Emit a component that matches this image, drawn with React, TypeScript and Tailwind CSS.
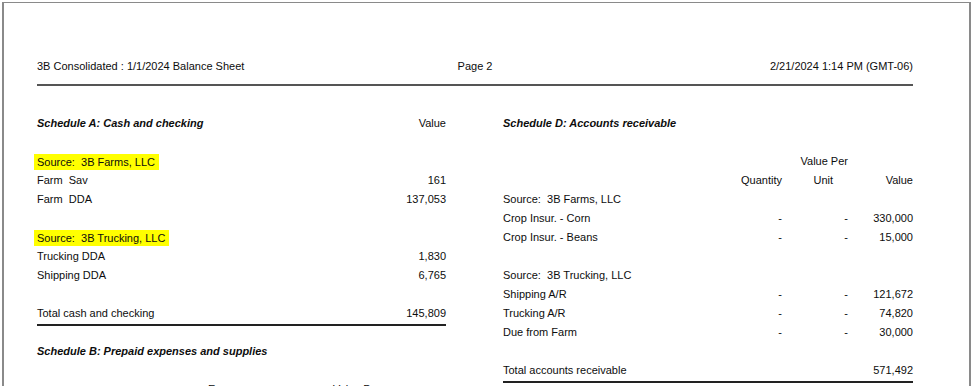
import React from "react";

type CashRow =
  | { kind: "source"; label: string }
  | { kind: "item"; label: string; value: string }
  | { kind: "blank" };

type ArRow =
  | { kind: "source"; label: string }
  | { kind: "item"; label: string; qty: string; unit: string; value: string }
  | { kind: "blank" };

const cashRows: CashRow[] = [
  { kind: "blank" },
  { kind: "source", label: "Source:  3B Farms, LLC" },
  { kind: "item", label: "Farm  Sav", value: "161" },
  { kind: "item", label: "Farm  DDA", value: "137,053" },
  { kind: "blank" },
  { kind: "source", label: "Source:  3B Trucking, LLC" },
  { kind: "item", label: "Trucking DDA", value: "1,830" },
  { kind: "item", label: "Shipping DDA", value: "6,765" },
  { kind: "blank" },
];

const arRows: ArRow[] = [
  { kind: "source", label: "Source:  3B Farms, LLC" },
  { kind: "item", label: "Crop Insur. - Corn", qty: "-", unit: "-", value: "330,000" },
  { kind: "item", label: "Crop Insur. - Beans", qty: "-", unit: "-", value: "15,000" },
  { kind: "blank" },
  { kind: "source", label: "Source:  3B Trucking, LLC" },
  { kind: "item", label: "Shipping A/R", qty: "-", unit: "-", value: "121,672" },
  { kind: "item", label: "Trucking A/R", qty: "-", unit: "-", value: "74,820" },
  { kind: "item", label: "Due from Farm", qty: "-", unit: "-", value: "30,000" },
  { kind: "blank" },
];

const row = "h-[19px] leading-[19px] whitespace-pre";
const title = "font-bold italic";

function ScheduleA() {
  return (
    <div className="w-[409px]">
      <div className={`${row} flex justify-between`}>
        <span className={title}>Schedule A: Cash and checking</span>
        <span>Value</span>
      </div>
      {cashRows.map((r, i) => {
        if (r.kind === "blank") return <div key={i} className={row} />;
        if (r.kind === "source")
          return (
            <div key={i} className={`${row} flex items-center`}>
              <span className="-ml-[3px] inline-block h-[16px] bg-[#ffff00] pl-[3px] pr-[4px] leading-[16px]">
                {r.label}
              </span>
            </div>
          );
        return (
          <div key={i} className={`${row} flex justify-between`}>
            <span>{r.label}</span>
            <span>{r.value}</span>
          </div>
        );
      })}
      <div className={`${row} flex justify-between`}>
        <span>Total cash and checking</span>
        <span>145,809</span>
      </div>
      <div className="mt-[1px] h-[2px] bg-[#222]" />
      <div className={`${row} mt-[16px]`}>
        <span className={title}>Schedule B: Prepaid expenses and supplies</span>
      </div>
      <div className={row} />
      {/* column heads of the next table, cut by the page edge */}
      <div className={`${row} relative`}>
        <span className="absolute left-[171px]">Expense</span>
        <span className="absolute left-[296px]">Value Per</span>
      </div>
    </div>
  );
}

function ScheduleD() {
  return (
    <div className="w-[410px]">
      <div className={row}>
        <span className={title}>Schedule D: Accounts receivable</span>
      </div>
      <div className={row} />
      <div className={`${row} grid grid-cols-[1fr_66px_65px]`}>
        <span />
        <span className="text-right">Value Per</span>
        <span />
      </div>
      <div className={`${row} grid grid-cols-[1fr_66px_65px]`}>
        <span className="text-right">Quantity</span>
        <span className="pr-[15px] text-right">Unit</span>
        <span className="text-right">Value</span>
      </div>
      {arRows.map((r, i) => {
        if (r.kind === "blank") return <div key={i} className={row} />;
        if (r.kind === "source")
          return (
            <div key={i} className={row}>
              {r.label}
            </div>
          );
        return (
          <div key={i} className={`${row} grid grid-cols-[1fr_66px_65px]`}>
            <span className="flex justify-between">
              <span>{r.label}</span>
              <span>{r.qty}</span>
            </span>
            <span className="text-right">{r.unit}</span>
            <span className="text-right">{r.value}</span>
          </div>
        );
      })}
      <div className={`${row} flex justify-between`}>
        <span>Total accounts receivable</span>
        <span>571,492</span>
      </div>
      <div className="mt-[1px] h-[2px] bg-[#222]" />
    </div>
  );
}

export default function App() {
  return (
    <div className="h-[386px] w-[975px] overflow-hidden bg-white pl-[2px] pt-[2px] font-['Liberation_Sans',Arial,sans-serif] text-[11px] text-[#0d0d0d]">
      <div className="h-[400px] w-[969px] border-l-2 border-r-2 border-t border-[#8a8a8a] pl-[33px] pr-[56px] pt-[54px]">
        <div className="grid h-[19px] grid-cols-[1fr_auto_1fr] leading-[19px]">
          <span>3B Consolidated : 1/1/2024 Balance Sheet</span>
          <span>Page 2</span>
          <span className="text-right">2/21/2024 1:14 PM (GMT-06)</span>
        </div>
        <div className="mt-[8px] h-[2px] bg-[#555]" />
        <div className="mt-[28px] flex gap-[57px]">
          <ScheduleA />
          <ScheduleD />
        </div>
      </div>
    </div>
  );
}
